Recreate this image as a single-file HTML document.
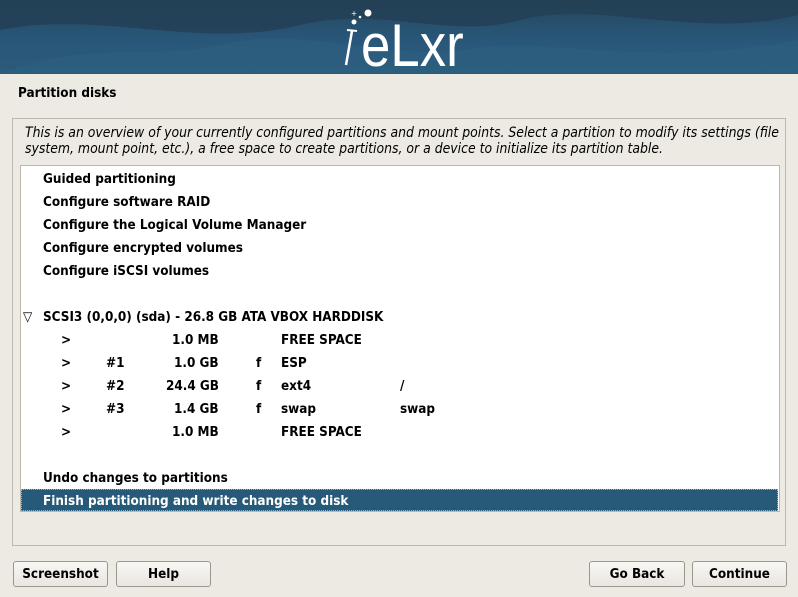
<!DOCTYPE html>
<html><head><style>
body{margin:0;width:798px;height:597px;background:#edeae4;font-family:"DejaVu Sans Condensed","DejaVu Sans",sans-serif;position:relative;overflow:hidden;font-size:13.4px;color:#000}
.hdr{position:absolute;left:0;top:0;width:798px;height:74px;background:linear-gradient(180deg,#24465c 0%,#29577a 55%,#2b5a7a 100%);overflow:hidden}
.t{position:absolute;white-space:nowrap}
.b{font-weight:bold}
.outer{position:absolute;left:12px;top:118px;width:772px;height:426px;border:1px solid #bdb8ad}
.list{position:absolute;left:20px;top:165px;width:758px;height:345px;background:#fff;border:1px solid #bdb8ad}
.sel{position:absolute;left:21px;top:489px;width:757px;height:22px;background:#275a78;outline:1px dotted #9fb4c2;outline-offset:-1px}
.btn{position:absolute;top:561px;height:24px;border:1px solid #9a968e;border-radius:3px;background:linear-gradient(#f8f7f4,#e9e6e0);font-weight:bold;text-align:center;line-height:25px;font-size:13.4px}
.rows .t{margin-top:1px}
</style></head><body>
<div class="hdr">
<svg width="798" height="74" style="position:absolute;left:0;top:0">
<path d="M0 30 C100 10 200 50 300 25 C380 5 450 40 520 20 C600 0 700 40 798 15 L798 0 L0 0Z" fill="#233f54" opacity="0.8"/>
<path d="M0 74 C80 40 160 60 220 45 C300 25 380 60 460 50 C560 35 640 70 798 40 L798 74Z" fill="#2d6182" opacity="0.5"/>
<line x1="346" y1="65" x2="352" y2="31" stroke="#fff" stroke-width="2.5"/>
<line x1="347" y1="30" x2="357" y2="31" stroke="#fff" stroke-width="2"/>
<circle cx="368" cy="13" r="3.5" fill="#fff"/>
<circle cx="360" cy="17" r="1.3" fill="#fff"/>
<circle cx="354" cy="22" r="2.5" fill="#fff"/>
<text x="351" y="16" fill="#fff" font-size="8">+</text>
</svg>
<div class="t" style="left:361px;top:14px;font-family:'Liberation Sans',sans-serif;font-size:60px;color:#fff;line-height:64px;transform:scaleX(0.88);transform-origin:left">eLxr</div>
</div>
<div class="t b" style="left:18px;top:86px">Partition disks</div>
<div class="outer"></div>
<div class="t" style="left:25px;top:125px;font-style:italic;font-size:13.85px;line-height:16px">This is an overview of your currently configured partitions and mount points. Select a partition to modify its settings (file<br>system, mount point, etc.), a free space to create partitions, or a device to initialize its partition table.</div>
<div class="list"></div>
<div class="sel"></div>
<div class="b rows">
<div class="t" style="left:43px;top:171px">Guided partitioning</div>
<div class="t" style="left:43px;top:194px">Configure software RAID</div>
<div class="t" style="left:43px;top:217px">Configure the Logical Volume Manager</div>
<div class="t" style="left:43px;top:240px">Configure encrypted volumes</div>
<div class="t" style="left:43px;top:263px">Configure iSCSI volumes</div>
<div class="t" style="left:23px;top:309px;font-weight:normal">▽</div>
<div class="t" style="left:43px;top:309px">SCSI3 (0,0,0) (sda) - 26.8 GB ATA VBOX HARDDISK</div>
<div class="t" style="left:61px;top:332px">&gt;</div><div class="t" style="left:172px;top:332px">1.0 MB</div><div class="t" style="left:281px;top:332px">FREE SPACE</div>
<div class="t" style="left:61px;top:355px">&gt;</div><div class="t" style="left:106px;top:355px">#1</div><div class="t" style="left:174px;top:355px">1.0 GB</div><div class="t" style="left:256px;top:355px">f</div><div class="t" style="left:281px;top:355px">ESP</div>
<div class="t" style="left:61px;top:378px">&gt;</div><div class="t" style="left:106px;top:378px">#2</div><div class="t" style="left:166px;top:378px">24.4 GB</div><div class="t" style="left:256px;top:378px">f</div><div class="t" style="left:281px;top:378px">ext4</div><div class="t" style="left:400px;top:378px">/</div>
<div class="t" style="left:61px;top:401px">&gt;</div><div class="t" style="left:106px;top:401px">#3</div><div class="t" style="left:174px;top:401px">1.4 GB</div><div class="t" style="left:256px;top:401px">f</div><div class="t" style="left:281px;top:401px">swap</div><div class="t" style="left:400px;top:401px">swap</div>
<div class="t" style="left:61px;top:424px">&gt;</div><div class="t" style="left:172px;top:424px">1.0 MB</div><div class="t" style="left:281px;top:424px">FREE SPACE</div>
<div class="t" style="left:43px;top:470px">Undo changes to partitions</div>
<div class="t" style="left:43px;top:493px;color:#fff">Finish partitioning and write changes to disk</div>
</div>
<div class="btn" style="left:13px;width:93px">Screenshot</div>
<div class="btn" style="left:116px;width:93px">Help</div>
<div class="btn" style="left:589px;width:94px">Go Back</div>
<div class="btn" style="left:692px;width:93px">Continue</div>
</body></html>
